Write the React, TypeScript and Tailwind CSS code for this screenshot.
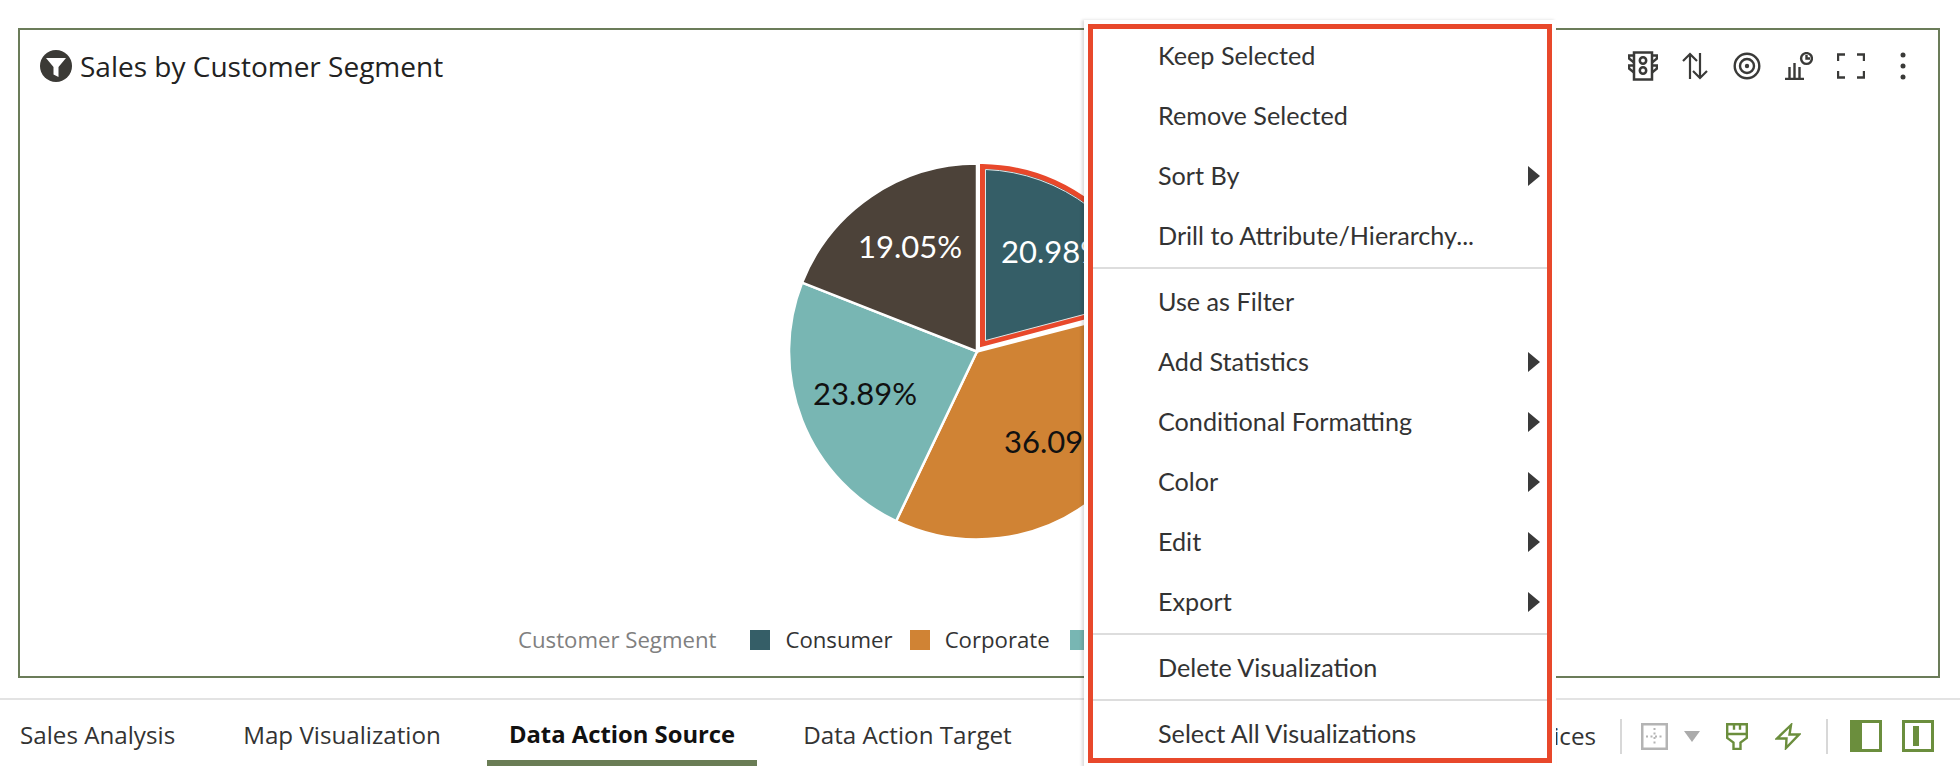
const ink = "#3a3a38";

function TrafficIcon() {
  return (
    <svg width="30" height="30" viewBox="0 0 30 30" fill="none" stroke={ink} strokeWidth="2.500">
      <rect x="6" y="1.500" width="18" height="27" />
      <circle cx="15" cy="9.500" r="3.200" />
      <circle cx="15" cy="19.500" r="3.200" />
      <path d="M6 4.500H1v3l5 4M24 4.500h5v3l-5 4M6 14.500H1v3l5 4M24 14.500h5v3l-5 4" />
    </svg>
  );
}

function SortIcon() {
  return (
    <svg width="26" height="28" viewBox="0 0 26 28" fill="none" stroke={ink} strokeWidth="2.200">
      <path d="M8 27V2M1 9l7-7 7 7" />
      <path d="M18 1v25M11 19l7 7 7-7" />
    </svg>
  );
}

function TargetIcon() {
  return (
    <svg width="28" height="28" viewBox="0 0 28 28" fill="none" stroke={ink} strokeWidth="2.400">
      <circle cx="14" cy="14" r="12.300" />
      <circle cx="14" cy="14" r="7" />
      <circle cx="14" cy="14" r="2.200" fill={ink} stroke="none" />
    </svg>
  );
}

function ChartClockIcon() {
  return (
    <svg width="28" height="28" viewBox="0 0 28 28" fill="none" stroke={ink} strokeWidth="2.400">
      <path d="M0 27h19M4.500 27V15M9.500 27V11M14.500 27V15" />
      <circle cx="21.500" cy="6.500" r="5.400" fill="#fff" />
      <path d="M21.500 3v3.500H25" />
    </svg>
  );
}

function ExpandIcon() {
  return (
    <svg width="28" height="26" viewBox="0 0 28 26" fill="none" stroke={ink} strokeWidth="2.400">
      <path d="M1 8V1.500h7M20 1.500h7V8M1 18v6.500h7M27 18v6.500h-7" />
    </svg>
  );
}

function KebabIcon() {
  return (
    <svg width="8" height="28" viewBox="0 0 8 28" fill={ink}>
      <circle cx="4" cy="3" r="2.500" />
      <circle cx="4" cy="14" r="2.500" />
      <circle cx="4" cy="25" r="2.500" />
    </svg>
  );
}

function FunnelBadge() {
  return (
    <svg width="32" height="32" viewBox="0 0 32 32" className="shrink-0">
      <circle cx="16" cy="16" r="16" fill="#3b3a36" />
      <path d="M6 8h20l-7.500 9v10l-5-2.500V17z" fill="#fff" />
    </svg>
  );
}

function GridIcon() {
  return (
    <svg width="27" height="27" viewBox="0 0 27 27" fill="none" stroke="#b4b4b4">
      <rect x="1.250" y="1.250" width="24.500" height="24.500" strokeWidth="2.500" />
      <path d="M13.500 5v17M5 13.500h17" strokeWidth="2" strokeDasharray="2 2.500" />
    </svg>
  );
}

function BrushIcon() {
  return (
    <svg width="22" height="27" viewBox="0 0 22 27" fill="none" stroke="#6b8e3d" strokeWidth="2.400">
      <path d="M1.200 1.200h19.600V15l-6.300 4.500V26h-7v-6.500L1.200 15z" />
      <path d="M1.200 11h19.600M8 1.200v5.500M14 1.200v5.500" />
    </svg>
  );
}

function BoltIcon() {
  return (
    <svg width="26" height="27" viewBox="0 0 26 27" fill="none" stroke="#6b8e3d" strokeWidth="2.400" strokeLinejoin="miter">
      <path d="M16 2 2 15.500h9.500L11 25l13-13.500h-9.500z" />
    </svg>
  );
}

function LeftPanelIcon() {
  return (
    <svg width="32" height="32" viewBox="0 0 32 32">
      <rect width="32" height="32" fill="#6b8e3d" />
      <rect x="12" y="3" width="17" height="26" fill="#fff" />
    </svg>
  );
}

function CenterPanelIcon() {
  return (
    <svg width="32" height="32" viewBox="0 0 32 32">
      <rect width="32" height="32" fill="#6b8e3d" />
      <rect x="3" y="3" width="26" height="26" fill="#fff" />
      <rect x="11" y="6" width="6" height="20" fill="#6b8e3d" />
    </svg>
  );
}

function PieChart() {
  return (
    <svg width="382" height="382" viewBox="788 160 382 382" className="shrink-0" style={{ fontFamily: "Lato, sans-serif" }}>
      <path d="M977 351.500 L1159 304.500 A188 188 0 0 1 896.100 521.200 Z" fill="#d08334" stroke="#fff" strokeWidth="2.500" />
      <path d="M977 351.500 L896.100 521.200 A188 188 0 0 1 802.100 282.600 Z" fill="#78b6b3" stroke="#fff" strokeWidth="2.500" />
      <path d="M977 351.500 L802.100 282.600 A188 188 0 0 1 977 163.500 Z" fill="#4c4239" stroke="#fff" strokeWidth="2.500" />
      <path d="M982.500 344 L982.500 166.600 A184.500 184.500 0 0 1 1155.600 298 Z" fill="#355e67" stroke="#e8482b" strokeWidth="5" />
      <path d="M985.500 340.500 L985.500 169.500 A182 182 0 0 1 1152 296.500 Z" fill="none" stroke="#dfe6e7" strokeWidth="1" />
      <text x="858" y="258" fontSize="31" fill="#fff">19.05%</text>
      <text x="1001" y="263" fontSize="31" fill="#fff">20.98%</text>
      <text x="813" y="405" fontSize="31" fill="#111">23.89%</text>
      <text x="1004" y="453" fontSize="31" fill="#111">36.09%</text>
    </svg>
  );
}

function MenuRow({ label, sub }: { label: string; sub?: boolean }) {
  return (
    <div className="flex h-[60px] shrink-0 items-center justify-between pl-[65px] pr-[7px] text-[25.2px] text-[#333] [font-family:Lato,sans-serif]">
      <span>{label}</span>
      {sub && <span className="h-0 w-0 border-y-[10px] border-l-[12px] border-y-transparent border-l-[#3a3a3a]" />}
    </div>
  );
}

function MenuSep() {
  return <div className="h-[2px] shrink-0 bg-[#dddddd]" />;
}

export default function App() {
  return (
    <div className="relative flex h-[766px] w-[1960px] flex-col overflow-hidden bg-white [font-family:'Open_Sans',sans-serif]">
      <div className="ml-[18px] mt-[28px] flex h-[650px] w-[1922px] shrink-0 flex-col border-2 border-[#6b7c59]">
        <div className="mt-[20px] flex h-[32px] shrink-0 items-center justify-between pl-[20px] pr-[9px]">
          <div className="flex items-center gap-[8px]">
            <FunnelBadge />
            <span className="text-[28px] leading-none text-[#222]">Sales by Customer Segment</span>
          </div>
          <div className="flex items-center">
            <div className="flex w-[52px] justify-center"><TrafficIcon /></div>
            <div className="flex w-[52px] justify-center"><SortIcon /></div>
            <div className="flex w-[52px] justify-center"><TargetIcon /></div>
            <div className="flex w-[52px] justify-center"><ChartClockIcon /></div>
            <div className="flex w-[52px] justify-center"><ExpandIcon /></div>
            <div className="flex w-[52px] justify-center"><KebabIcon /></div>
          </div>
        </div>
        <div className="mt-[78px] flex justify-center">
          <PieChart />
        </div>
        <div className="ml-[498px] mt-[83px] flex h-[30px] items-center text-[22.2px] text-[#333]">
          <span className="mr-[34px] text-[#808080]">Customer Segment</span>
          <span className="mr-[15px] h-[20px] w-[20px] bg-[#355e67]" />
          <span className="mr-[17px]">Consumer</span>
          <span className="mr-[15px] h-[20px] w-[20px] bg-[#d08334]" />
          <span className="mr-[20px]">Corporate</span>
          <span className="mr-[15px] h-[20px] w-[20px] bg-[#78b6b3]" />
          <span>Home Office</span>
        </div>
      </div>

      <div className="mt-[20px] flex h-[68px] shrink-0 items-stretch border-t-2 border-[#e3e3e3] text-[24.2px] text-[#333]">
        <div className="-ml-[2px] flex gap-[24px]">
          <div className="flex items-center border-b-[6px] border-transparent px-[22px] pt-[10px]">Sales Analysis</div>
          <div className="flex items-center border-b-[6px] border-transparent px-[22px] pt-[10px]">Map Visualization</div>
          <div className="flex items-center border-b-[6px] border-[#6a7d55] px-[22px] pt-[10px] text-[23.8px] font-bold text-[#111]">Data Action Source</div>
          <div className="flex items-center border-b-[6px] border-transparent px-[22px] pt-[10px]">Data Action Target</div>
        </div>
        <div className="ml-auto flex items-center pr-[26px] pt-[6px]">
          <span>Slices</span>
          <div className="ml-[24px] h-[35px] w-[2px] bg-[#d8d8d8]" />
          <div className="ml-[19px]"><GridIcon /></div>
          <span className="ml-[16px] h-0 w-0 border-x-[8px] border-t-[11px] border-x-transparent border-t-[#ababab]" />
          <div className="ml-[26px]"><BrushIcon /></div>
          <div className="ml-[27px]"><BoltIcon /></div>
          <div className="ml-[25px] h-[35px] w-[2px] bg-[#d8d8d8]" />
          <div className="ml-[22px]"><LeftPanelIcon /></div>
          <div className="ml-[20px]"><CenterPanelIcon /></div>
        </div>
      </div>

      <div className="absolute left-[1084px] top-[20px] h-[748px] w-[472px] bg-white p-[4px] shadow-[-2px_0_3px_rgba(0,0,0,0.15)]">
        <div className="flex h-[739px] flex-col overflow-hidden border-[5px] border-[#e8482b]">
          <div className="-mt-[3px] flex shrink-0 flex-col">
            <MenuRow label="Keep Selected" />
            <MenuRow label="Remove Selected" />
            <MenuRow label="Sort By" sub />
            <MenuRow label="Drill to Attribute/Hierarchy..." />
          </div>
          <div className="mt-[1px] shrink-0"><MenuSep /></div>
          <div className="mt-[3px] flex shrink-0 flex-col">
            <MenuRow label="Use as Filter" />
            <MenuRow label="Add Statistics" sub />
            <MenuRow label="Conditional Formatting" sub />
            <MenuRow label="Color" sub />
            <MenuRow label="Edit" sub />
            <MenuRow label="Export" sub />
          </div>
          <div className="mt-[1px] shrink-0"><MenuSep /></div>
          <div className="mt-[3px] shrink-0"><MenuRow label="Delete Visualization" /></div>
          <div className="mt-[1px] shrink-0"><MenuSep /></div>
          <div className="mt-[3px] shrink-0"><MenuRow label="Select All Visualizations" /></div>
        </div>
      </div>
    </div>
  );
}
